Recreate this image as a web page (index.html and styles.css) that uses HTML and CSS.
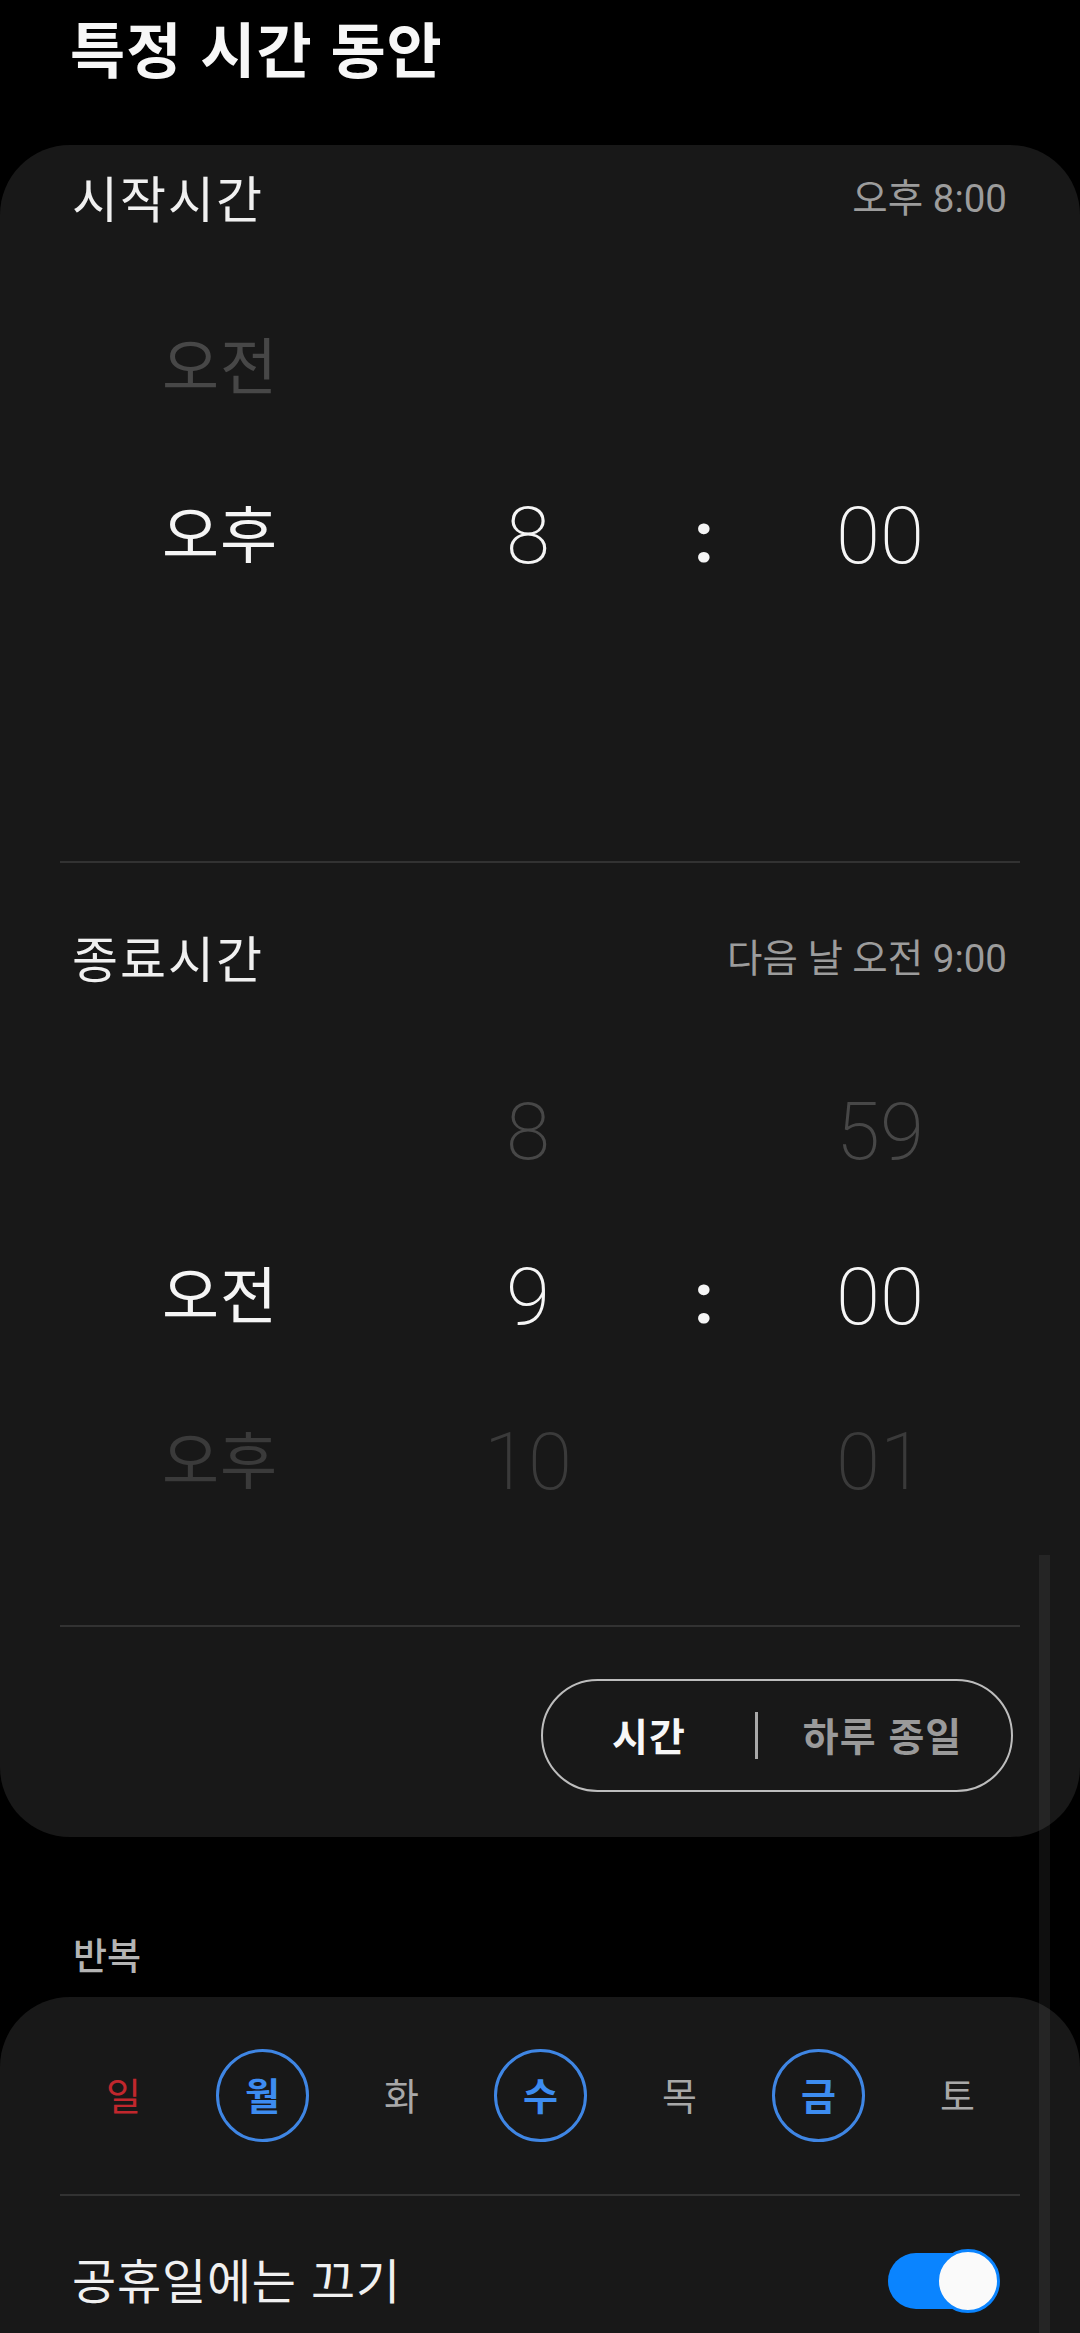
FILE: index.html
```html
<!DOCTYPE html>
<html lang="ko">
<head>
<meta charset="utf-8">
<title>특정 시간 동안</title>
<link rel="stylesheet" href="styles.css">
</head>
<body>
<div class="screen">
  <header class="top">
    <h1 class="title">특정 시간 동안</h1>
  </header>

  <section class="card card-time">
    <div class="row-head">
      <span class="label">시작시간</span>
      <span class="value">오후 8:00</span>
    </div>
    <div class="picker picker-start">
      <span class="ampm dim1">오전</span><span></span><span></span><span></span>
      <span class="ampm sel">오후</span><span class="num sel">8</span><span class="colon">:</span><span class="num sel">00</span>
      <span></span><span></span><span></span><span></span>
    </div>
    <div class="divider div-a"></div>
    <div class="row-head row-head-2">
      <span class="label">종료시간</span>
      <span class="value">다음 날 오전 9:00</span>
    </div>
    <div class="picker picker-end">
      <span></span><span class="num dim1">8</span><span></span><span class="num dim1">59</span>
      <span class="ampm sel">오전</span><span class="num sel">9</span><span class="colon">:</span><span class="num sel">00</span>
      <span class="ampm dim2">오후</span><span class="num dim2">10</span><span></span><span class="num dim2">01</span>
    </div>
    <div class="divider div-b"></div>
    <div class="seg-wrap">
      <div class="seg">
        <span class="seg-on">시간</span>
        <span class="seg-sep"></span>
        <span class="seg-off">하루 종일</span>
      </div>
    </div>
  </section>

  <div class="sub-head">반복</div>

  <section class="card card-repeat">
    <div class="days">
      <span class="day sun">일</span>
      <span class="day on">월</span>
      <span class="day">화</span>
      <span class="day on">수</span>
      <span class="day">목</span>
      <span class="day on">금</span>
      <span class="day">토</span>
    </div>
    <div class="divider div-c"></div>
    <div class="toggle-row">
      <span class="toggle-label">공휴일에는 끄기</span>
      <span class="switch"><span class="knob"></span></span>
    </div>
  </section>

  <div class="scrollbar"></div>
</div>
</body>
</html>
```

FILE: styles.css
```css
html, body {
  margin: 0;
  padding: 0;
  background: #000;
}
body {
  font-family: Roboto, "Noto Sans CJK KR", sans-serif;
  color: #f2f2f2;
}
.screen {
  position: relative;
  width: 1080px;
  height: 2333px;
  overflow: hidden;
  background: #000;
}
.top {
  height: 145px;
  box-sizing: border-box;
  padding-left: 70px;
}
.title {
  margin: 0;
  font-family: "Noto Sans CJK KR", sans-serif;
  font-weight: 700;
  font-size: 60px;
  line-height: 94px;
  color: #f7f7f7;
  letter-spacing: 1px;
}
.card {
  background: #181818;
  border-radius: 70px;
}
.card-time {
  height: 1692px;
  box-sizing: border-box;
}
.row-head {
  height: 108px;
  display: flex;
  align-items: center;
  justify-content: space-between;
  padding: 0 73px 0 72px;
}
.row-head-2 {
  margin-top: 42px;
}
.label {
  font-family: "Noto Sans CJK KR", sans-serif;
  font-size: 50px;
  letter-spacing: 2px;
  color: #f0f0f0;
  padding-bottom: 6px;
}
.value {
  font-family: Roboto, "Noto Sans CJK KR", sans-serif;
  font-size: 38.5px;
  color: #9c9c9c;
  padding-bottom: 8px;
}
.picker {
  display: grid;
  grid-template-columns: 320px 296px 56px 296px;
  grid-auto-rows: 165px;
  padding-left: 60px;
  align-items: center;
  justify-items: center;
}
.picker-start {
  margin-top: 35px;
}
.picker-end {
  margin-top: 36px;
}
.ampm {
  font-family: "Noto Sans CJK KR", sans-serif;
  font-size: 62px;
  letter-spacing: 1px;
  line-height: 1;
  padding-bottom: 10px;
}
.picker-start .dim1 {
  padding-bottom: 16px;
}
.num {
  font-family: Roboto, sans-serif;
  font-weight: 200;
  font-size: 80px;
  line-height: 1;
}
.colon {
  font-family: Roboto, sans-serif;
  font-weight: 700;
  font-size: 72px;
  line-height: 1;
  color: #f5f5f5;
  padding-top: 4px;
}
.sel { color: #f5f5f5; }
.dim1 { color: #474747; }
.dim2 { color: #3a3a3a; }
.divider {
  height: 2px;
  background: #323232;
  margin: 0 60px;
}
.div-a { margin-top: 78px; }
.div-b { margin-top: 81px; }
.seg-wrap {
  display: flex;
  justify-content: flex-end;
  padding-right: 67px;
  margin-top: 52px;
}
.seg {
  width: 472px;
  height: 113px;
  box-sizing: border-box;
  border: 2.5px solid #bdbdbd;
  border-radius: 57px;
  display: flex;
  align-items: center;
  font-family: "Noto Sans CJK KR", sans-serif;
  font-size: 39px;
  letter-spacing: 1px;
  font-weight: 700;
}
.seg-on {
  width: 212px;
  text-align: center;
  color: #f7f7f7;
  padding-bottom: 4px;
}
.seg-sep {
  width: 3px;
  height: 47px;
  background: #a8a8a8;
}
.seg-off {
  flex: 1;
  text-align: center;
  color: #9a9a9a;
  padding-right: 4px;
  padding-bottom: 4px;
}
.sub-head {
  padding: 92px 0 18px 73px;
  line-height: 50px;
  font-family: "Noto Sans CJK KR", sans-serif;
  font-size: 37px;
  font-weight: 500;
  color: #b4b4b4;
}
.card-repeat {
  height: 420px;
  border-bottom-left-radius: 0;
  border-bottom-right-radius: 0;
}
.days {
  display: grid;
  grid-template-columns: repeat(7, 139px);
  padding: 52px 0 52px 54px;
  justify-items: center;
  align-items: center;
}
.day {
  width: 93px;
  height: 93px;
  box-sizing: border-box;
  border-radius: 50%;
  display: flex;
  align-items: center;
  justify-content: center;
  font-family: "Noto Sans CJK KR", sans-serif;
  font-size: 38px;
  color: #a8a8a8;
  padding-bottom: 4px;
}
.day.sun { color: #c1272d; }
.day.on {
  border: 3px solid #3f86e4;
  color: #3d8cf0;
  font-weight: 700;
}
.toggle-row {
  height: 170px;
  display: flex;
  align-items: center;
  justify-content: space-between;
  padding: 0 83px 0 72px;
}
.toggle-label {
  font-family: "Noto Sans CJK KR", sans-serif;
  font-size: 48px;
  letter-spacing: 0.8px;
  color: #f0f0f0;
  padding-bottom: 6px;
}
.switch {
  position: relative;
  width: 109px;
  height: 56px;
  border-radius: 28px;
  background: #0a84ff;
}
.knob {
  position: absolute;
  right: -3px;
  top: -4px;
  width: 64px;
  height: 64px;
  box-sizing: border-box;
  border-radius: 50%;
  border: 3px solid #0a84ff;
  background: #fafafa;
}
.scrollbar {
  position: absolute;
  left: 1039px;
  top: 1555px;
  width: 11px;
  height: 778px;
  background: rgba(255, 255, 255, 0.06);
}
```
